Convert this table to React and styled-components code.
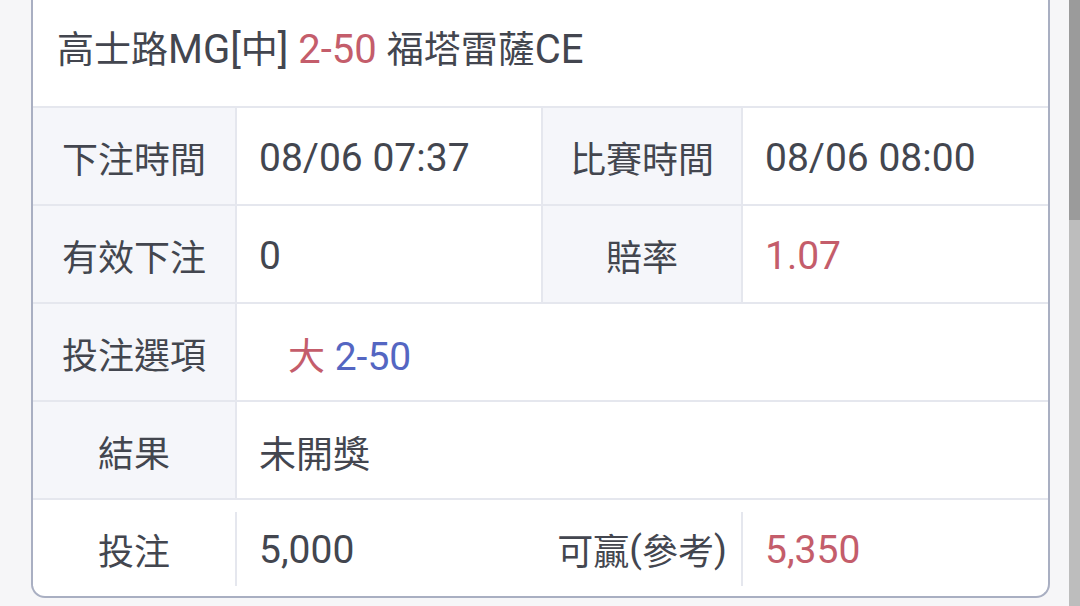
import React from "react";
import styled, { createGlobalStyle } from "styled-components";

const Global = createGlobalStyle`
  html, body { margin: 0; padding: 0; background: #f6f6f8; }
  body { font-family: Roboto, "Noto Sans CJK TC", sans-serif; color: #43464f; overflow: hidden; }
`;

const Page = styled.div`
  display: flex;
  width: 1080px;
  height: 606px;
  background: #f6f6f8;
`;

const Card = styled.div`
  margin-left: 31px;
  width: 1019px;
  height: 598px;
  box-sizing: border-box;
  background: #fff;
  border: 2px solid #a9afc2;
  border-top: none;
  border-radius: 0 0 14px 14px;
  display: flex;
  flex-direction: column;
  overflow: hidden;
`;

const Header = styled.div`
  height: 106px;
  box-sizing: border-box;
  padding: 0 0 12px 24px;
  display: flex;
  align-items: center;
  font-size: 37px;
`;

const Line = styled.span`
  white-space: pre;
`;

/* Latin glyphs render larger than the CJK ones in the reference */
const Lat = styled.span`
  font-size: ${(p) => p.$size || 39}px;
  color: ${(p) => p.$color || "inherit"};
`;

const Row = styled.div`
  display: grid;
  grid-template-columns: ${(p) => (p.$span ? "204px 1fr" : "204px 306px 200px 1fr")};
  height: 98px;
  box-sizing: border-box;
  border-top: 2px solid #e5e7ee;
  font-size: 36px;
`;

const Label = styled.div`
  display: flex;
  align-items: center;
  justify-content: center;
  background: ${(p) => (p.$plain ? "#fff" : "#f5f6fa")};
  border-right: 2px solid #e5e7ee;
  margin: ${(p) => (p.$plain ? "12px 0 10px" : "0")};
  padding-top: ${(p) => (p.$plain ? "0" : "1px")};
  white-space: pre;
`;

const Value = styled.div`
  display: flex;
  align-items: center;
  box-sizing: border-box;
  padding-top: 4px;
  padding-left: ${(p) => (p.$indent ? "51px" : "22px")};
  border-right: ${(p) => (p.$divider ? "2px solid #e5e7ee" : "none")};
  font-size: 37px;
`;

const Gutter = styled.div`
  flex: 1;
`;

const ScrollTrack = styled.div`
  width: 11px;
  background: #bdbdbd;
  display: flex;
  flex-direction: column;
`;

const ScrollThumb = styled.div`
  height: 220px;
  background: #9b9b9b;
`;

const RED = "#c45d6b";
const BLUE = "#5466c2";

export default function App() {
  return (
    <>
      <Global />
      <Page>
        <Card>
          <Header>
            <Line>
              高士路<Lat $size={40}>MG[</Lat>中<Lat $size={40}>] </Lat>
              <Lat $size={40} $color={RED}>2-50</Lat>
              <Lat $size={40}> </Lat>福塔雷薩<Lat $size={40}>CE</Lat>
            </Line>
          </Header>
          <Row>
            <Label>下注時間</Label>
            <Value $divider>
              <Lat>08/06 07:37</Lat>
            </Value>
            <Label>比賽時間</Label>
            <Value>
              <Lat>08/06 08:00</Lat>
            </Value>
          </Row>
          <Row>
            <Label>有效下注</Label>
            <Value $divider>
              <Lat>0</Lat>
            </Value>
            <Label>賠率</Label>
            <Value>
              <Lat $color={RED}>1.07</Lat>
            </Value>
          </Row>
          <Row $span>
            <Label>投注選項</Label>
            <Value $indent>
              <Line>
                <Lat $size={37} $color={RED}>大</Lat>
                <Lat> </Lat>
                <Lat $color={BLUE}>2-50</Lat>
              </Line>
            </Value>
          </Row>
          <Row $span>
            <Label>結果</Label>
            <Value>未開獎</Value>
          </Row>
          <Row>
            <Label $plain>投注</Label>
            <Value>
              <Lat>5,000</Lat>
            </Value>
            <Label $plain>
              可贏<Lat $size={37}>(</Lat>參考<Lat $size={37}>)</Lat>
            </Label>
            <Value>
              <Lat $color={RED}>5,350</Lat>
            </Value>
          </Row>
        </Card>
        <Gutter />
        <ScrollTrack>
          <ScrollThumb />
        </ScrollTrack>
      </Page>
    </>
  );
}
